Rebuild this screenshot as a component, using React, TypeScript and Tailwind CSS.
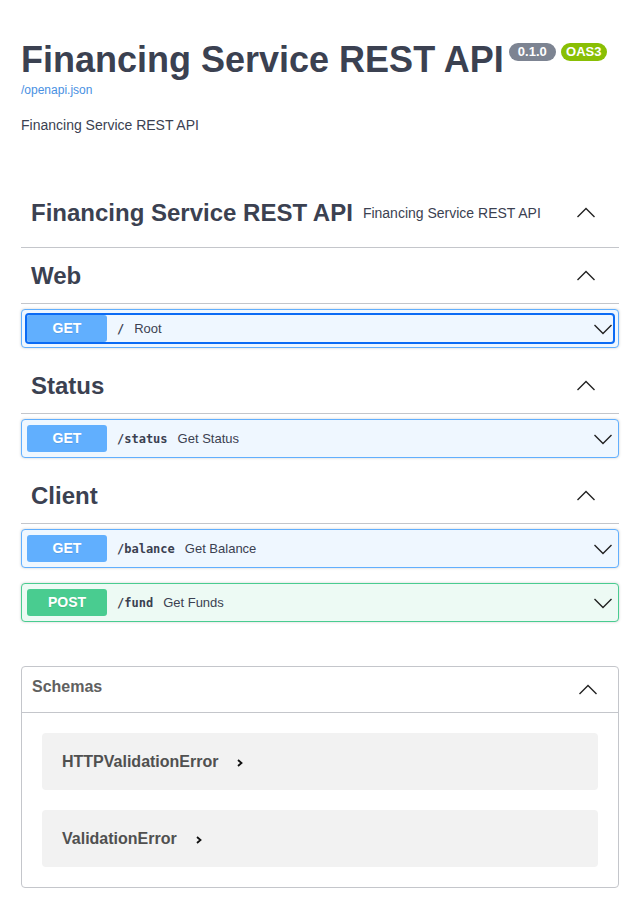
import React from "react";

const ChevronUp = ({ className = "" }: { className?: string }) => (
  <svg width="20" height="20" viewBox="0 0 20 20" className={className}>
    <polyline points="1.5,14 10,5.5 18.5,14" fill="none" stroke="#222" strokeWidth="1.4" />
  </svg>
);

const ChevronDown = ({ className = "" }: { className?: string }) => (
  <svg width="20" height="20" viewBox="0 0 20 20" className={className}>
    <polyline points="1.5,6 10,14.5 18.5,6" fill="none" stroke="#222" strokeWidth="1.4" />
  </svg>
);

type Op = { method: "GET" | "POST"; path: string; summary: string; focused?: boolean };

const METHOD_STYLES = {
  GET: { row: "border-[#61affe] bg-[#eff7ff]", badge: "bg-[#61affe]" },
  POST: { row: "border-[#49cc90] bg-[#edfaf4]", badge: "bg-[#49cc90]" },
};

const OpRow = ({ op }: { op: Op }) => {
  const s = METHOD_STYLES[op.method];
  return (
    <div className={`h-[39px] mb-[15px] border rounded-[4px] shadow-[0_0_3px_rgba(0,0,0,0.19)] p-[5px] ${s.row}`}>
      <div
        className={`w-full h-[27px] flex items-center rounded-[2px] ${op.focused ? "outline-2 outline-[#0b6bf4]" : ""}`}
      >
        <span
          className={`w-[80px] h-[27px] flex items-center justify-center rounded-[3px] text-white text-[14px] font-bold [text-shadow:0_1px_0_rgba(0,0,0,0.1)] ${s.badge}`}
        >
          {op.method}
        </span>
        <span className="px-[10px] font-['DejaVu_Sans_Mono',monospace] font-bold text-[12px] text-[#3b4151]">
          {op.path}
        </span>
        <span className="text-[13px] text-[#3b4151]">{op.summary}</span>
        <ChevronDown className="ml-auto" />
      </div>
    </div>
  );
};

const TagHeader = ({ name }: { name: string }) => (
  <div className="h-[51px] pb-[4px] mb-[5px] pl-[10px] pr-[23px] flex items-center justify-between border-b border-[#c4c6cb]">
    <h3 className="text-[24px] font-bold text-[#3b4151] leading-[32px]">{name}</h3>
    <ChevronUp />
  </div>
);

const SECTIONS: { name: string; ops: Op[] }[] = [
  { name: "Web", ops: [{ method: "GET", path: "/", summary: "Root", focused: true }] },
  { name: "Status", ops: [{ method: "GET", path: "/status", summary: "Get Status" }] },
  {
    name: "Client",
    ops: [
      { method: "GET", path: "/balance", summary: "Get Balance" },
      { method: "POST", path: "/fund", summary: "Get Funds" },
    ],
  },
];

const SCHEMAS = ["HTTPValidationError", "ValidationError"];

export default function App() {
  return (
    <div className="min-h-[907px] bg-white pl-[21px] pr-[20px] pt-[40px] pb-[20px] font-['Liberation_Sans',Arial,sans-serif] text-[#3b4151]">
      {/* Info */}
      <div className="flex items-start">
        <h1 className="text-[36px] font-bold leading-[40px] text-[#3b4151]">Financing Service REST API</h1>
        <span className="ml-[5px] mt-[3px] w-[47px] h-[18px] flex items-center justify-center rounded-full bg-[#7d8492] text-white text-[13px] font-bold">
          0.1.0
        </span>
        <span className="ml-[5px] mt-[3px] w-[46px] h-[18px] flex items-center justify-center rounded-full bg-[#89bf04] text-white text-[13px] font-bold">
          OAS3
        </span>
      </div>
      <a className="block mt-[2px] text-[12px] leading-[16px] text-[#4990e2]">/openapi.json</a>
      <p className="mt-[17px] text-[14px] leading-[20px]">Financing Service REST API</p>

      {/* Tag with description */}
      <div className="mt-[55px] h-[58px] pt-[7px] mb-[5px] pl-[10px] pr-[23px] flex items-start justify-between border-b border-[#c4c6cb]">
        <div className="flex items-center h-[32px]">
          <h3 className="text-[24px] font-bold leading-[32px]">Financing Service REST API</h3>
          <small className="px-[10px] text-[14px]">Financing Service REST API</small>
        </div>
        <ChevronUp className="mt-[6px]" />
      </div>

      {SECTIONS.map((sec) => (
        <div key={sec.name}>
          <TagHeader name={sec.name} />
          {sec.ops.map((op) => (
            <OpRow key={op.method + op.path} op={op} />
          ))}
        </div>
      ))}

      {/* Schemas */}
      <div className="mt-[44px] border border-[#c4c6cb] rounded-[4px]">
        <div className="h-[46px] pl-[10px] pr-[20px] flex items-center justify-between border-b border-[#c4c6cb]">
          <h4 className="text-[16px] font-bold text-[#606060] pb-[5px]">Schemas</h4>
          <ChevronUp />
        </div>
        <div className="p-[20px] flex flex-col gap-[20px]">
          {SCHEMAS.map((name) => (
            <div key={name} className="h-[57px] rounded-[4px] bg-[#f2f2f2] px-[20px] flex items-center">
              <span className="text-[16px] font-bold text-[#505050]">{name}</span>
              <svg width="10" height="10" viewBox="0 0 10 10" className="ml-[17px] mt-[2px]">
                <polyline points="3,2 6.5,5 3,8" fill="none" stroke="#111" strokeWidth="1.8" />
              </svg>
            </div>
          ))}
        </div>
      </div>
    </div>
  );
}
